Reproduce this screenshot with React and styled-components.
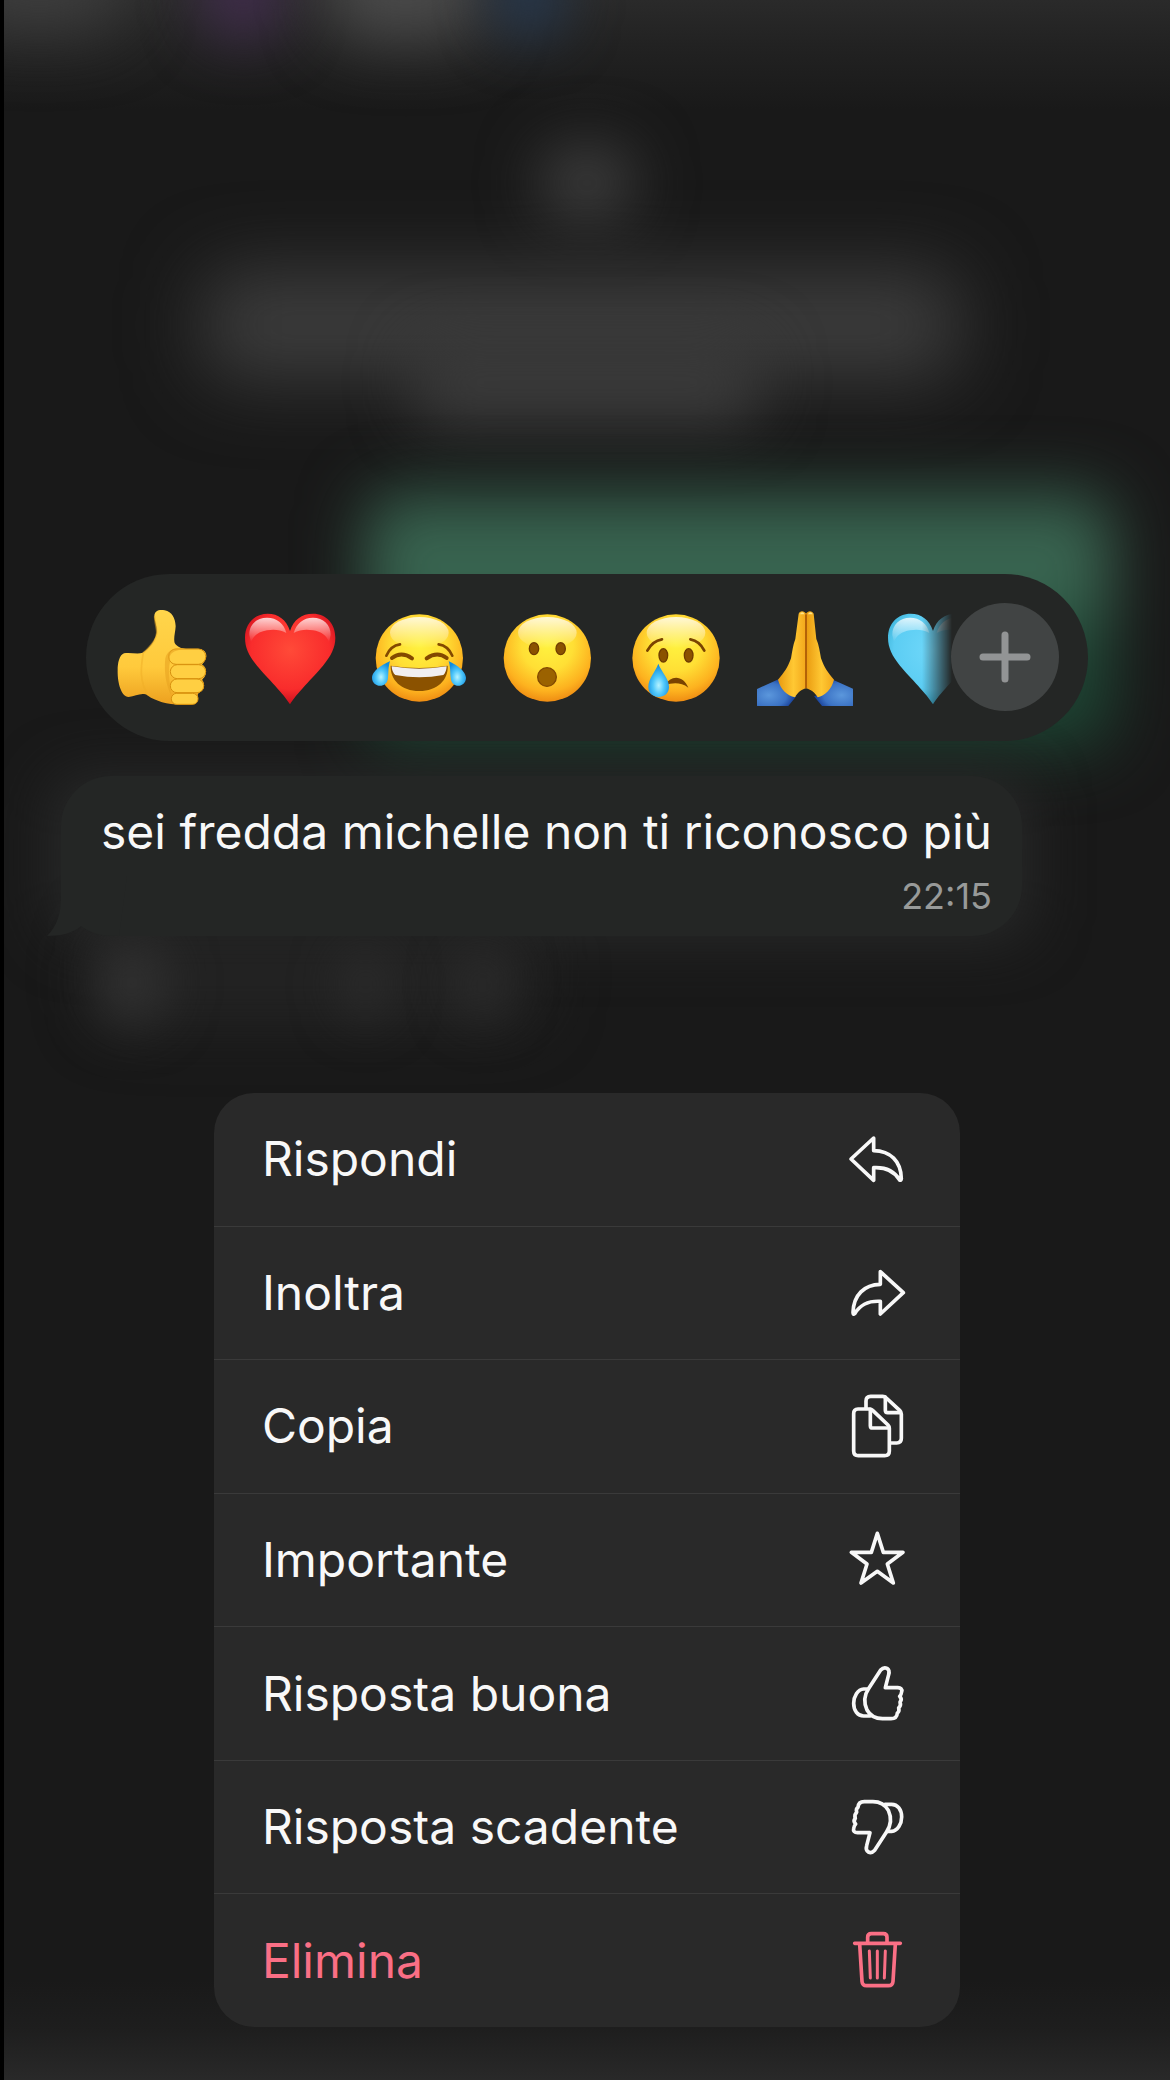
import React from 'react';
import styled, { createGlobalStyle } from 'styled-components';

const GlobalStyle = createGlobalStyle`
  * {
    box-sizing: border-box;
  }

  body {
    margin: 0;
    background: #191919;
    color: #f8f8f8;
    font-family: Inter, 'Liberation Sans', sans-serif;
  }

  button {
    margin: 0;
    padding: 0;
    border: 0;
    background: none;
    color: inherit;
    font: inherit;
    cursor: pointer;
  }
`;

const Screen = styled.main`
  position: relative;
  min-height: 100vh;
  padding: 574px 0 52px;
  border-left: 4px solid #000000;
  display: flex;
  flex-direction: column;
  align-items: center;
  overflow: hidden;
`;

const Backdrop = styled.div`
  position: absolute;
  inset: 0;
  overflow: hidden;
  background: linear-gradient(#2a2a2a, #222222 45px, transparent 110px),
    linear-gradient(to top, #292929, #1e1e1e 50px, transparent 100px), #191919;
`;

const Glow = styled.div`
  position: absolute;
  left: ${props => props.$left}%;
  top: ${props => props.$top}px;
  width: ${props => props.$width}%;
  height: ${props => props.$height}px;
  border-radius: 30px;
  background: ${props => props.$color};
  filter: blur(${props => props.$blur || 26}px);
`;

const ReactionBar = styled.section`
  position: relative;
  width: 86%;
  height: 167px;
  padding: 0 91px 0 12px;
  border-radius: 84px;
  background: #242625;
`;

const Reactions = styled.div`
  display: flex;
  height: 100%;
  mask-image: linear-gradient(to right, #000 824px, transparent 854px);
`;

const Reaction = styled.button`
  flex: 1;
  display: flex;
  align-items: center;
  justify-content: center;
`;

const EmojiSvg = styled.svg`
  width: 96px;
  height: 96px;
`;

const MoreButton = styled.button`
  position: absolute;
  top: 29px;
  right: 29px;
  width: 108px;
  height: 108px;
  border-radius: 50%;
  background: #414444;
  display: flex;
  align-items: center;
  justify-content: center;
`;

const Bubble = styled.article`
  position: relative;
  align-self: flex-start;
  margin: 35px 0 0 57px;
  padding: 24px 30px 18px 40px;
  border-radius: 50px;
  background: #242625;
  display: flex;
  flex-direction: column;
`;

const Tail = styled.svg`
  position: absolute;
  left: -14px;
  bottom: 0;
  width: 80px;
  height: 60px;
`;

const Message = styled.p`
  margin: 0;
  font-size: 48px;
  line-height: 64px;
  white-space: nowrap;
`;

const Time = styled.time`
  align-self: flex-end;
  margin-top: 10px;
  font-size: 36px;
  line-height: 44px;
  color: #989a99;
`;

const Menu = styled.div`
  position: relative;
  width: 64%;
  min-height: 934px;
  margin-top: 157px;
  border-radius: 40px;
  background: #292929;
  overflow: hidden;
  display: flex;
  flex-direction: column;
`;

const MenuItem = styled.button`
  flex: 1;
  display: flex;
  align-items: center;
  justify-content: space-between;
  padding: 0 53px 0 48px;
  font-size: 48px;
  line-height: 64px;
  color: ${props => (props.$danger ? '#fa6f85' : '#f8f8f8')};

  & + & {
    border-top: 1px solid #3a3a3a;
  }
`;

const IconSvg = styled.svg`
  width: 60px;
  height: 72px;
  fill: none;
  stroke: currentColor;
  stroke-width: 11;
  stroke-linecap: round;
  stroke-linejoin: round;
`;

const GradientDefs = styled.svg`
  position: absolute;
  width: 0;
  height: 0;
`;

const FaceGradients = () => (
  <GradientDefs aria-hidden="true">
    <defs>
      <radialGradient id="face" cx="0.5" cy="0.35" r="0.66">
        <stop offset="0" stopColor="#fff23f" />
        <stop offset="0.45" stopColor="#ffdf35" />
        <stop offset="0.8" stopColor="#fdb21f" />
        <stop offset="1" stopColor="#ee8a12" />
      </radialGradient>
      <linearGradient id="shine" x1="0" y1="0" x2="0" y2="1">
        <stop offset="0" stopColor="#fff" stopOpacity="0.8" />
        <stop offset="1" stopColor="#fff" stopOpacity="0" />
      </linearGradient>
      <radialGradient id="tear" cx="0.5" cy="0.65" r="0.6">
        <stop offset="0" stopColor="#b5f2ff" />
        <stop offset="0.45" stopColor="#50c8fb" />
        <stop offset="1" stopColor="#128bdc" />
      </radialGradient>
      <linearGradient id="skin" x1="0" y1="0" x2="0" y2="1">
        <stop offset="0" stopColor="#ffd54b" />
        <stop offset="0.6" stopColor="#ffca3c" />
        <stop offset="1" stopColor="#eda01f" />
      </linearGradient>
      <linearGradient id="palm" x1="0" y1="0" x2="1" y2="0">
        <stop offset="0" stopColor="#e99a10" />
        <stop offset="0.55" stopColor="#ffc833" />
        <stop offset="1" stopColor="#f2a71b" />
      </linearGradient>
      <radialGradient id="sleeve" cx="0.3" cy="0.6" r="0.75">
        <stop offset="0" stopColor="#5b97dc" />
        <stop offset="0.6" stopColor="#3b72c4" />
        <stop offset="1" stopColor="#0b2c86" />
      </radialGradient>
    </defs>
  </GradientDefs>
);

const Face = ({ cx, children }) => (
  <>
    <circle cx={cx} cy="291" r="131" fill="url(#face)" />
    <ellipse cx={cx} cy="215" rx="88" ry="47" fill="url(#shine)" />
    {children}
  </>
);

const ThumbEmoji = () => (
  <EmojiSvg viewBox="102 147 288 288">
    <path
      d="M132 277C150 273 172 281 188 275C208 262 224 242 230 216C232 200 225 184 223 168C222 148 238 145 254 148C276 152 286 172 287 196C286 216 280 230 284 246C292 258 304 263 318 263H352C372 262 384 276 377 294C372 303 371 304 366 311C380 316 382 338 372 350C368 353 370 353 366 356C376 368 374 386 362 392C356 395 354 398 353 402C358 418 350 430 332 431H302C262 430 226 420 204 404C186 392 168 406 146 408C122 408 112 360 113 328C113 306 118 282 132 277Z"
      fill="url(#skin)"
    />
    <g fill="#ffcf42" stroke="#d8910f" strokeWidth="3">
      <rect x="266" y="264" width="111" height="46" rx="22" />
      <rect x="271" y="311" width="106" height="42" rx="21" />
      <rect x="271" y="354" width="100" height="41" rx="20" />
      <rect x="274" y="397" width="80" height="33" rx="16" />
    </g>
    <path
      d="M224 166C223 194 240 212 222 240C212 254 202 266 190 275C182 320 178 360 204 402"
      fill="none"
      stroke="#f0ae26"
      strokeWidth="5"
      opacity="0.5"
    />
    <path
      d="M256 292C262 266 286 259 312 263L300 266C276 270 264 282 270 302C264 328 268 360 274 404C256 370 252 326 256 292Z"
      fill="#e8a321"
      opacity="0.6"
    />
  </EmojiSvg>
);

const HeartEmoji = ({ id, light, main, edge }) => (
  <EmojiSvg viewBox="485 147 288 288">
    <defs>
      <radialGradient id={id} cx="0.5" cy="0.4" r="0.62">
        <stop offset="0" stopColor={light} />
        <stop offset="0.7" stopColor={main} />
        <stop offset="1" stopColor={edge} />
      </radialGradient>
    </defs>
    <path
      d="M629 430C612 400 560 350 530 314C506 284 494 260 494 230C494 188 522 158 562 158C594 158 618 176 629 210C640 176 664 158 698 158C738 158 765 188 765 230C765 260 752 284 728 314C698 350 646 400 629 430Z"
      fill={`url(#${id})`}
    />
    <path
      d="M507 222C506 190 530 170 560 170C590 170 612 188 618 216C600 206 580 204 560 208C536 212 518 224 512 244Z"
      fill="url(#shine)"
    />
    <path
      d="M751 222C752 190 728 170 698 170C668 170 648 188 640 216C658 206 678 204 698 208C722 212 740 224 746 244Z"
      fill="url(#shine)"
    />
  </EmojiSvg>
);

const JoyEmoji = () => (
  <EmojiSvg viewBox="871 147 288 288">
    <Face cx="1016">
      <g fill="none" stroke="#834900" strokeLinecap="round">
        <path d="M917 284Q930 254 958 250" strokeWidth="8" />
        <path d="M1115 284Q1102 254 1074 250" strokeWidth="8" />
        <path d="M934 291Q962 270 994 292" strokeWidth="12" />
        <path d="M1038 292Q1070 270 1098 291" strokeWidth="12" />
      </g>
      <path
        d="M930 314Q1016 328 1101 314C1104 356 1070 390 1016 390C962 390 928 356 930 314Z"
        fill="#8b5200"
      />
      <path
        d="M933 316Q1016 330 1098 316Q1097 334 1088 342Q1016 356 944 342Q934 334 933 316Z"
        fill="#f1eff0"
      />
      <path
        d="M928 300C918 306 876 324 874 350C874 380 920 384 922 350C924 334 922 320 928 300Z"
        fill="url(#tear)"
      />
      <path
        d="M1104 300C1114 306 1154 324 1156 350C1156 380 1112 384 1110 350C1108 334 1110 320 1104 300Z"
        fill="url(#tear)"
      />
    </Face>
  </EmojiSvg>
);

const WowEmoji = () => (
  <EmojiSvg viewBox="86 147 288 288">
    <Face cx="231">
      <g fill="#8b5200" stroke="#6f3c00" strokeWidth="4">
        <ellipse cx="191" cy="263" rx="14" ry="18" />
        <ellipse cx="271" cy="263" rx="14" ry="18" />
      </g>
      <circle
        cx="230"
        cy="348"
        r="28"
        fill="#9b6200"
        stroke="#804700"
        strokeWidth="4"
      />
    </Face>
  </EmojiSvg>
);

const CryEmoji = () => (
  <EmojiSvg viewBox="473 147 288 288">
    <Face cx="617">
      <g fill="none" stroke="#7a4300" strokeWidth="8" strokeLinecap="round">
        <path d="M531 269Q546 240 575 235" />
        <path d="M702 269Q688 240 660 235" />
      </g>
      <g fill="#8b5200" stroke="#6f3c00" strokeWidth="4">
        <ellipse cx="579" cy="283" rx="13" ry="20" />
        <ellipse cx="655" cy="283" rx="13" ry="20" />
      </g>
      <path
        d="M584 374C600 340 640 342 654 380C632 364 606 364 584 374Z"
        fill="#7a4300"
      />
      <path
        d="M564 308C574 334 596 352 596 378C596 418 534 418 534 378C534 352 554 334 564 308Z"
        fill="url(#tear)"
      />
    </Face>
  </EmojiSvg>
);

const sleevePath =
  'M858 384L924 354C932 378 950 398 976 406L952 435H858Z';

const PrayEmoji = () => (
  <EmojiSvg viewBox="858 147 288 288">
    <path d={sleevePath} fill="url(#sleeve)" />
    <g transform="matrix(-1 0 0 1 2005 0)">
      <path d={sleevePath} fill="url(#sleeve)" />
    </g>
    <path
      d="M1005 158C1000 148 986 148 983 158L973 234C966 252 964 270 960 292C950 320 940 334 921 356C928 384 948 404 972 409C980 394 992 386 1005 382Z"
      fill="url(#palm)"
    />
    <path
      d="M1005 158C1010 148 1024 148 1028 158L1036 234C1044 252 1046 270 1050 292C1060 320 1070 334 1089 356C1082 384 1062 404 1040 409C1032 394 1018 386 1005 382Z"
      fill="url(#palm)"
    />
    <path d="M1005 160V381" stroke="#a85605" strokeWidth="5" />
    <path
      d="M987 160C990 152 998 152 1000 160ZM1011 160C1014 152 1022 152 1025 160Z"
      fill="#ffe489"
    />
  </EmojiSvg>
);

const RedHeart = () => (
  <HeartEmoji id="red-heart" light="#ff4a38" main="#f92c2c" edge="#c60b1c" />
);

const BlueHeart = () => (
  <HeartEmoji id="blue-heart" light="#70d8fa" main="#5ccdf3" edge="#31a9cf" />
);

const reactions = [
  { label: 'Pollice in su', Emoji: ThumbEmoji },
  { label: 'Cuore rosso', Emoji: RedHeart },
  { label: 'Risata', Emoji: JoyEmoji },
  { label: 'Sorpresa', Emoji: WowEmoji },
  { label: 'Tristezza', Emoji: CryEmoji },
  { label: 'Mani giunte', Emoji: PrayEmoji },
  { label: 'Cuore azzurro', Emoji: BlueHeart },
];

const ReplyIcon = () => (
  <IconSvg viewBox="50 44 180 216" aria-hidden="true">
    <path d="M130 89L62 152L130 216V178C168 176 192 188 208 215Q212 217 213 211C212 158 180 128 130 127Z" />
  </IconSvg>
);

const ForwardIcon = () => (
  <IconSvg viewBox="50 445 180 216" aria-hidden="true">
    <path d="M150 489L219 552L150 616V578C112 576 90 588 73 615Q68 619 68 611C70 558 102 528 150 527Z" />
  </IconSvg>
);

const CopyIcon = () => (
  <IconSvg viewBox="50 35 180 216" aria-hidden="true">
    <path d="M83 92H118Q123 92 127 96L173 140Q177 144 177 150V218Q177 232 163 232H84Q70 232 70 218V106Q70 92 83 92Z" />
    <path d="M120 93V142Q120 149 127 149H175" />
    <path d="M107 90V68Q107 54 121 54H157Q163 54 168 59L208 96Q213 101 213 107V180Q213 194 199 194H179" />
    <path d="M165 56V96Q165 103 172 103H210" />
  </IconSvg>
);

const StarIcon = () => (
  <IconSvg viewBox="50 436 180 216" aria-hidden="true">
    <path d="M141 464L159 521H218L171 556L189 613L141 578L92 613L110 556L63 521H123Z" />
  </IconSvg>
);

const thumb = (
  <>
    <path d="M66 90L101 36Q110 26 120 31Q129 37 125 50L115 89H152Q167 90 164 101Q163 110 158 115Q167 124 159 132Q163 143 155 150Q158 161 151 165Q150 182 132 182H110C88 183 70 174 60 156C50 134 52 110 66 90Z" />
    <path d="M62 93H50C32 94 20 116 20 136C20 158 32 174 50 174H70" />
  </>
);

const ThumbUpIcon = () => (
  <IconSvg viewBox="0 0 180 216" aria-hidden="true">
    {thumb}
  </IconSvg>
);

const ThumbDownIcon = () => (
  <IconSvg viewBox="0 0 180 216" aria-hidden="true">
    <g transform="rotate(180 92 107)">{thumb}</g>
  </IconSvg>
);

const TrashIcon = () => (
  <IconSvg viewBox="50 47 180 216" aria-hidden="true">
    <path d="M73 102H210M112 100V84Q112 73 123 73H159Q170 73 170 84V100" />
    <path d="M88 104L95 216Q96 229 109 229H174Q187 229 188 216L195 104" />
    <path d="M117 125L120 206M141 125V206M165 125L162 206" strokeWidth="9" />
  </IconSvg>
);

const actions = [
  { label: 'Rispondi', Icon: ReplyIcon },
  { label: 'Inoltra', Icon: ForwardIcon },
  { label: 'Copia', Icon: CopyIcon },
  { label: 'Importante', Icon: StarIcon },
  { label: 'Risposta buona', Icon: ThumbUpIcon },
  { label: 'Risposta scadente', Icon: ThumbDownIcon },
  { label: 'Elimina', Icon: TrashIcon, danger: true },
];

// blurred chat behind the menu
const ChatBackdrop = () => (
  <Backdrop aria-hidden="true">
    <Glow $left={-4} $top={-80} $width={14} $height={110} $color="#3e3e3e" $blur={34} />
    <Glow $left={17} $top={-60} $width={7} $height={100} $color="#3f2c4a" $blur={28} />
    <Glow $left={28} $top={-80} $width={13} $height={120} $color="#4a4a4a" $blur={32} />
    <Glow $left={42} $top={-50} $width={6} $height={90} $color="#26364a" $blur={26} />
    <Glow $left={46} $top={145} $width={8} $height={76} $color="#3d3d3d" $blur={30} />
    <Glow $left={17} $top={270} $width={65} $height={110} $color="#3c3c3c" $blur={38} />
    <Glow $left={35} $top={340} $width={30} $height={85} $color="#3a3a3a" $blur={30} />
    <Glow
      $left={31}
      $top={492}
      $width={64}
      $height={258}
      $color="linear-gradient(#325a48, #3d6a55 35%, #1f4836 60%, #1c4030)"
      $blur={32}
    />
    <Glow $left={4} $top={775} $width={84} $height={165} $color="#282929" $blur={28} />
    <Glow $left={8} $top={925} $width={38} $height={100} $color="#232323" $blur={30} />
    <Glow $left={8} $top={940} $width={6} $height={85} $color="#303030" $blur={24} />
    <Glow $left={29} $top={950} $width={4} $height={70} $color="#2c2c2c" $blur={24} />
    <Glow $left={39} $top={950} $width={4} $height={70} $color="#2c2c2c" $blur={24} />
  </Backdrop>
);

export default function App() {
  return (
    <>
      <GlobalStyle />
      <FaceGradients />
      <Screen>
        <ChatBackdrop />
        <ReactionBar aria-label="Reazioni">
          <Reactions>
            {reactions.map(({ label, Emoji }) => (
              <Reaction key={label} type="button" aria-label={label}>
                <Emoji />
              </Reaction>
            ))}
          </Reactions>
          <MoreButton type="button" aria-label="Altre reazioni">
            <svg width="52" height="52" viewBox="0 0 52 52" aria-hidden="true">
              <path
                d="M26 4V48M4 26H48"
                stroke="#929495"
                strokeWidth="7"
                strokeLinecap="round"
              />
            </svg>
          </MoreButton>
        </ReactionBar>
        <Bubble>
          <Tail viewBox="0 0 80 60" aria-hidden="true">
            <path
              d="M14 0V20C14 38 10 50 0 60C14 60 26 57 34 50C44 57 54 60 72 60L80 0Z"
              fill="#242625"
            />
          </Tail>
          <Message>sei fredda michelle non ti riconosco più</Message>
          <Time>22:15</Time>
        </Bubble>
        <Menu>
          {actions.map(({ label, Icon, danger }) => (
            <MenuItem key={label} type="button" $danger={danger}>
              <span>{label}</span>
              <Icon />
            </MenuItem>
          ))}
        </Menu>
      </Screen>
    </>
  );
}
